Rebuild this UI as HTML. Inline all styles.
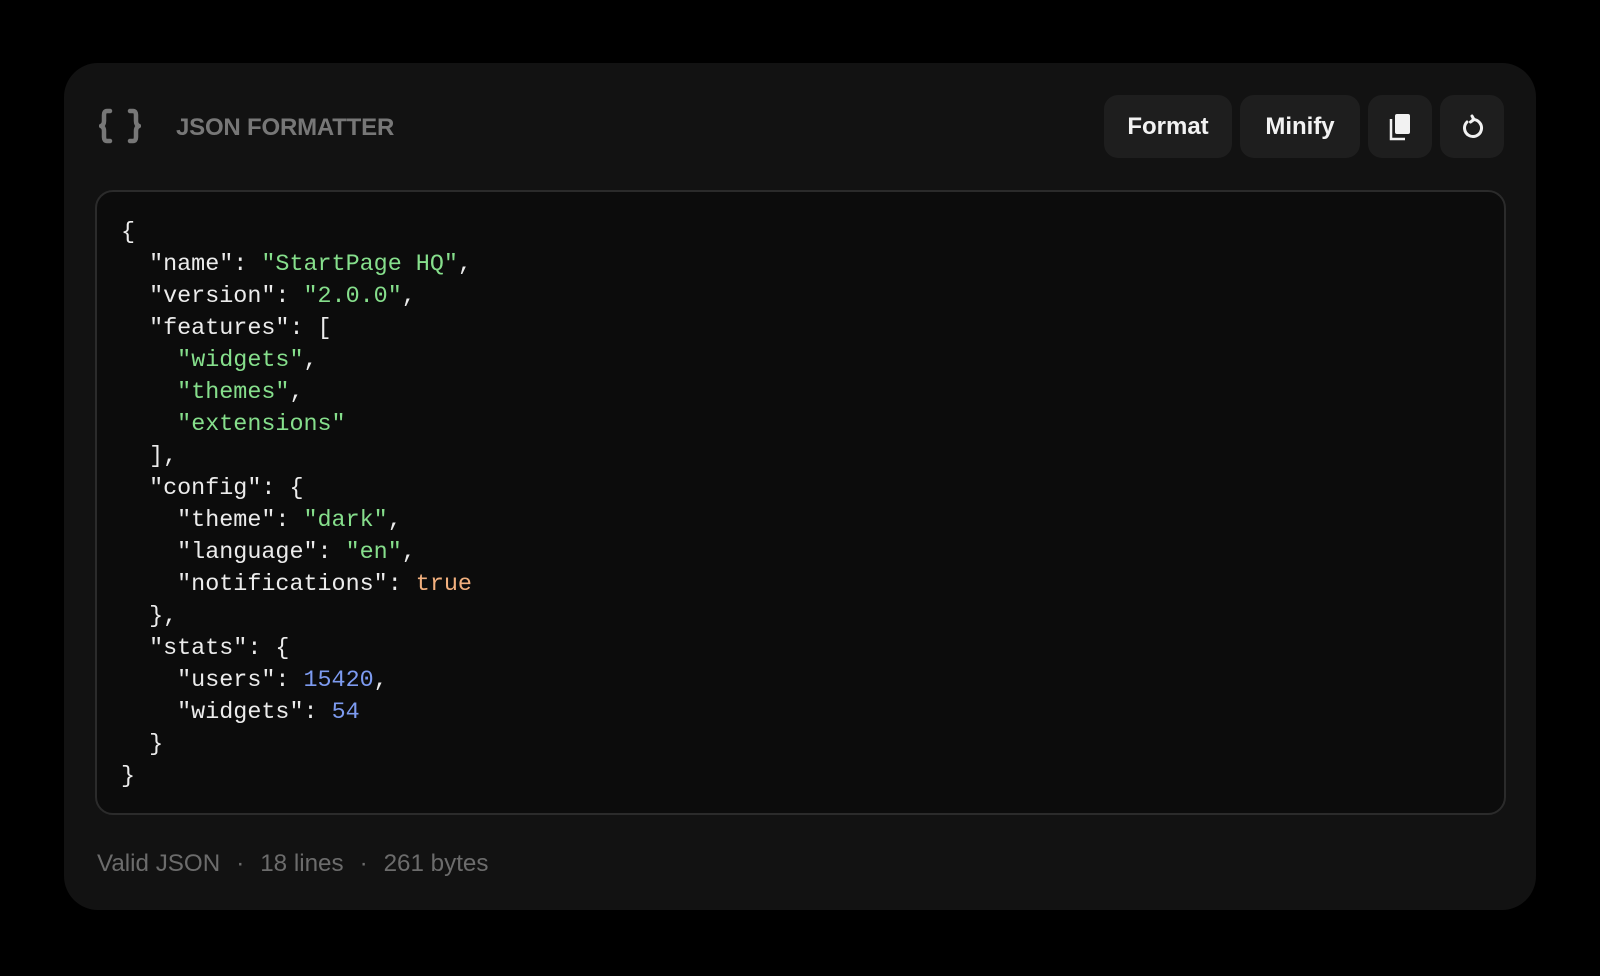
<!DOCTYPE html>
<html><head><meta charset="utf-8"><style>
*{margin:0;padding:0;box-sizing:border-box}
body{width:1600px;height:976px;background:#000;font-family:"Liberation Sans",sans-serif;position:relative;overflow:hidden}
.card{position:absolute;left:64px;top:63px;width:1472px;height:847px;background:#121212;border-radius:34px}
.title{position:absolute;left:176px;top:114px;font-size:24px;font-weight:bold;color:#777;letter-spacing:-0.2px}
.btn{position:absolute;top:95px;height:63px;background:#1e1e1e;border-radius:14px;color:#f2f2f2;font-size:24px;font-weight:bold;display:flex;align-items:center;justify-content:center}
.ed{position:absolute;left:95px;top:190px;width:1411px;height:625px;background:#0c0c0c;border:2px solid #2b2b2b;border-radius:18px;padding:25px 0 0 24px}
pre{font-family:"Liberation Mono",monospace;font-size:23.4px;line-height:32px;color:#ececec}
.s{color:#86df8c}.b{color:#f2b07e}.n{color:#7d9bf0}
.foot{position:absolute;left:97px;top:850px;font-size:24.2px;color:#6c6c6c}
.foot span{display:inline-block;width:40px;text-align:center}
</style></head><body>
<div class="card"></div>
<svg style="position:absolute;left:99px;top:108px" width="42" height="36" viewBox="0 0 42 36" fill="none" stroke="#777" stroke-width="4.5" stroke-linecap="round" stroke-linejoin="round">
<path d="M11 3H8Q5 3 5 7V13Q5 17 2 18Q5 19 5 23V29Q5 33 8 33H11"/>
<path d="M31 3H34Q37 3 37 7V13Q37 17 40 18Q37 19 37 23V29Q37 33 34 33H31"/>
</svg>
<div class="title">JSON FORMATTER</div>
<div class="btn" style="left:1104px;width:128px">Format</div>
<div class="btn" style="left:1240px;width:120px">Minify</div>
<div class="btn" style="left:1368px;width:64px">
<svg width="26" height="28" viewBox="0 0 26 28"><rect x="8" y="1" width="15" height="20" rx="2" fill="#f2f2f2"/><path d="M4 6V26H18" fill="none" stroke="#f2f2f2" stroke-width="2.5"/></svg></div>
<div class="btn" style="left:1440px;width:64px">
<svg width="26" height="28" viewBox="0 0 26 28" fill="none" stroke="#f2f2f2" stroke-width="3" stroke-linecap="round" stroke-linejoin="round"><path d="M8 9A8.5 8.5 0 1 0 14 6.5"/><path d="M13 3L15 6.5L11.5 9"/></svg></div>
<div class="ed"><pre>{
  "name": <span class="s">"StartPage HQ"</span>,
  "version": <span class="s">"2.0.0"</span>,
  "features": [
    <span class="s">"widgets"</span>,
    <span class="s">"themes"</span>,
    <span class="s">"extensions"</span>
  ],
  "config": {
    "theme": <span class="s">"dark"</span>,
    "language": <span class="s">"en"</span>,
    "notifications": <span class="b">true</span>
  },
  "stats": {
    "users": <span class="n">15420</span>,
    "widgets": <span class="n">54</span>
  }
}</pre></div>
<div class="foot">Valid JSON<span>·</span>18 lines<span>·</span>261 bytes</div>
</body></html>
